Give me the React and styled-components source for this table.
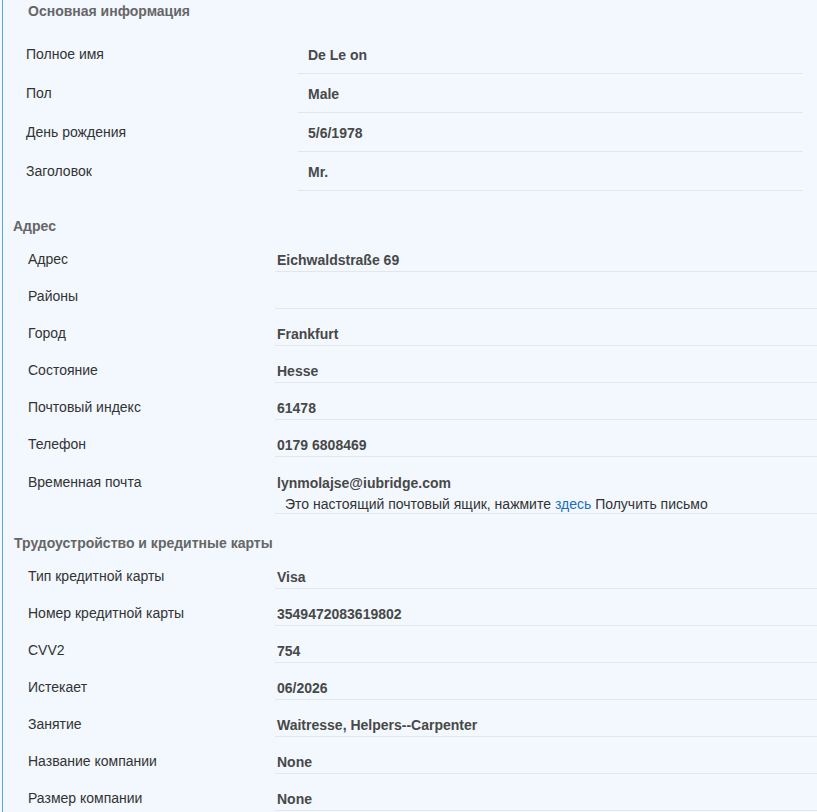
import styled, { createGlobalStyle } from "styled-components";

const GlobalStyle = createGlobalStyle`
  html, body {
    margin: 0;
    padding: 0;
    background: #f2f8fe;
  }
  body {
    font-family: "Liberation Sans", Arial, sans-serif;
    font-size: 14px;
    color: #333;
  }
`;

const basicInfo = [
  ["Полное имя", "De Le on"],
  ["Пол", "Male"],
  ["День рождения", "5/6/1978"],
  ["Заголовок", "Mr."],
];

const address = [
  ["Адрес", "Eichwaldstraße 69"],
  ["Районы", ""],
  ["Город", "Frankfurt"],
  ["Состояние", "Hesse"],
  ["Почтовый индекс", "61478"],
  ["Телефон", "0179 6808469"],
];

const jobs = [
  ["Тип кредитной карты", "Visa"],
  ["Номер кредитной карты", "3549472083619802"],
  ["CVV2", "754"],
  ["Истекает", "06/2026"],
  ["Занятие", "Waitresse, Helpers--Carpenter"],
  ["Название компании", "None"],
  ["Размер компании", "None"],
];

export default function App() {
  return (
    <>
      <GlobalStyle />
      <Page>
        <SectionTitle indent={25} top={3} bottom={16}>
          Основная информация
        </SectionTitle>
        <Table compact>
          {basicInfo.map(([label, value]) => (
            <Row key={label} compact>
              <Label compact>{label}</Label>
              <Value compact>{value}</Value>
            </Row>
          ))}
        </Table>

        <SectionTitle indent={10} top={27} bottom={1}>
          Адрес
        </SectionTitle>
        <Table>
          {address.map(([label, value]) => (
            <Row key={label}>
              <Label>{label}</Label>
              <Value>{value}</Value>
            </Row>
          ))}
          <Row>
            <Label tall>Временная почта</Label>
            <Value tall>
              lynmolajse@iubridge.com
              <Note>
                Это настоящий почтовый ящик, нажмите <Link href="#">здесь</Link>{" "}
                Получить письмо
              </Note>
            </Value>
          </Row>
        </Table>

        <SectionTitle indent={11} top={21} bottom={1}>
          Трудоустройство и кредитные карты
        </SectionTitle>
        <Table>
          {jobs.map(([label, value]) => (
            <Row key={label}>
              <Label>{label}</Label>
              <Value>{value}</Value>
            </Row>
          ))}
        </Table>
      </Page>
    </>
  );
}

const Page = styled.div`
  margin-left: 2px;
  border-left: 1px solid #5fa3e2;
  min-height: 812px;
  background: #f2f8fe;
  box-sizing: border-box;
`;

const SectionTitle = styled.div`
  padding: ${(p) => `${p.top}px 0 ${p.bottom}px ${p.indent}px`};
  font-size: 14px;
  line-height: 16px;
  font-weight: bold;
  color: #666;
`;

const Table = styled.div`
  display: flex;
  flex-direction: column;
  padding-left: ${(p) => (p.compact ? "23px" : "25px")};
  padding-right: ${(p) => (p.compact ? "14px" : "0")};
`;

const Row = styled.div`
  display: grid;
  grid-template-columns: ${(p) => (p.compact ? "272px 1fr" : "247px 1fr")};
`;

const Label = styled.div`
  padding-top: ${(p) => (p.compact ? "10px" : p.tall ? "16px" : "15px")};
  line-height: 18px;
  color: #333;
`;

const Value = styled.div`
  padding: ${(p) =>
    p.compact ? "11px 0 9px 10px" : p.tall ? "17px 0 1px 2px" : "16px 0 2px 2px"};
  line-height: 18px;
  font-weight: bold;
  color: #484848;
  border-bottom: 1px solid #e3e6ea;
  min-height: 18px;
`;

const Note = styled.div`
  padding: 4px 0 0 8px;
  line-height: 16px;
  font-weight: normal;
  color: #333;
`;

const Link = styled.a`
  color: #1a6dc2;
  text-decoration: none;
`;
